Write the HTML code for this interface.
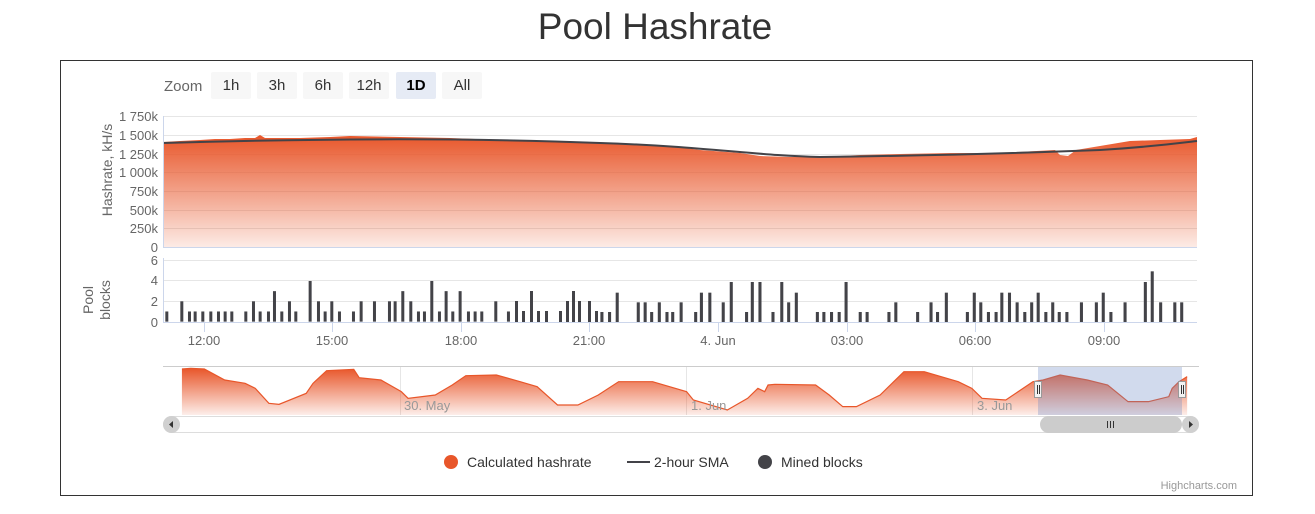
<!DOCTYPE html>
<html><head><meta charset="utf-8"><style>
body{margin:0;background:#fff;width:1315px;height:509px;overflow:hidden;font-family:"Liberation Sans",sans-serif}
</style></head><body>
<svg width="1315" height="509" xmlns="http://www.w3.org/2000/svg" font-family="Liberation Sans, sans-serif">
<defs>
<linearGradient id="g" x1="0" y1="0" x2="0" y2="1"><stop offset="0" stop-color="#e8562a"/><stop offset="1" stop-color="#e8562a" stop-opacity="0.12"/></linearGradient>
<linearGradient id="g2" x1="0" y1="0" x2="0" y2="1"><stop offset="0" stop-color="#e8562a"/><stop offset="1" stop-color="#e8562a" stop-opacity="0.1"/></linearGradient>
</defs>
<text x="655" y="39" text-anchor="middle" font-size="37" fill="#333">Pool Hashrate</text>
<rect x="60.5" y="60.5" width="1192" height="435" fill="none" stroke="#333"/>
<text x="164" y="91" font-size="15" fill="#666">Zoom</text>
<g font-size="15" fill="#333" text-anchor="middle">
<rect x="211" y="72" width="40" height="27" rx="2" fill="#f7f7f7"/><text x="231" y="90">1h</text>
<rect x="257" y="72" width="40" height="27" rx="2" fill="#f7f7f7"/><text x="277" y="90">3h</text>
<rect x="303" y="72" width="40" height="27" rx="2" fill="#f7f7f7"/><text x="323" y="90">6h</text>
<rect x="349" y="72" width="40" height="27" rx="2" fill="#f7f7f7"/><text x="369" y="90">12h</text>
<rect x="396" y="72" width="40" height="27" rx="2" fill="#e6ebf5"/><text x="416" y="90" font-weight="bold" fill="#000">1D</text>
<rect x="442" y="72" width="40" height="27" rx="2" fill="#f7f7f7"/><text x="462" y="90">All</text>
</g>
<g stroke="#e6e6e6">
<line x1="163" y1="116.5" x2="1197" y2="116.5"/><line x1="163" y1="135.5" x2="1197" y2="135.5"/><line x1="163" y1="154.5" x2="1197" y2="154.5"/><line x1="163" y1="172.5" x2="1197" y2="172.5"/><line x1="163" y1="191.5" x2="1197" y2="191.5"/><line x1="163" y1="210.5" x2="1197" y2="210.5"/><line x1="163" y1="228.5" x2="1197" y2="228.5"/>
<line x1="163" y1="260.5" x2="1197" y2="260.5"/><line x1="163" y1="280.5" x2="1197" y2="280.5"/><line x1="163" y1="301.5" x2="1197" y2="301.5"/>
</g>
<g font-size="13" fill="#666" text-anchor="end">
<text x="158" y="121">1 750k</text><text x="158" y="140">1 500k</text><text x="158" y="159">1 250k</text><text x="158" y="177">1 000k</text><text x="158" y="196">750k</text><text x="158" y="215">500k</text><text x="158" y="233">250k</text><text x="158" y="252">0</text>
<text x="158" y="265">6</text><text x="158" y="285">4</text><text x="158" y="306">2</text><text x="158" y="327">0</text>
</g>
<text transform="translate(112,170) rotate(-90)" text-anchor="middle" font-size="14" fill="#666">Hashrate, kH/s</text>
<text transform="translate(93,300) rotate(-90)" text-anchor="middle" font-size="14" fill="#666">Pool</text>
<text transform="translate(110,300) rotate(-90)" text-anchor="middle" font-size="14" fill="#666">blocks</text>
<path d="M163,142 L180,141 L200,140 L215,139 L230,139 L245,138 L255,138 L260,135 L265,138 L300,138 L330,137 L350,136 L400,137 L450,138 L500,140 L560,141 L620,143 L670,146 L700,150 L740,153 L760,156 L790,157 L820,157 L860,155 L900,154 L950,153 L1000,153 L1055,150 L1060,155 L1068,156 L1076,150 L1100,146 L1130,141 L1160,140 L1190,139 L1197,137 L1197,247 L163,247Z" fill="url(#g)"/>
<path d="M163,143 C300,139 450,137 600,143 C700,146 760,156 820,157 C900,156 1000,154 1100,150 C1150,147 1180,143 1197,141" fill="none" stroke="#434348" stroke-width="2"/>
<line x1="163.5" y1="116" x2="163.5" y2="247" stroke="#ccd6eb"/>
<line x1="163.5" y1="258" x2="163.5" y2="322" stroke="#ccd6eb"/>
<line x1="163" y1="247.5" x2="1197" y2="247.5" stroke="#ccd6eb"/>
<g fill="#434348">
<g transform="translate(60,60) scale(0.3333)">
<rect x="316" y="754.5" width="9" height="30.5"/><rect x="361" y="724" width="9" height="61"/><rect x="384" y="754.5" width="9" height="30.5"/><rect x="401" y="754.5" width="9" height="30.5"/><rect x="424" y="754.5" width="9" height="30.5"/><rect x="448" y="754.5" width="9" height="30.5"/><rect x="471" y="754.5" width="9" height="30.5"/><rect x="491" y="754.5" width="9" height="30.5"/><rect x="511" y="754.5" width="9" height="30.5"/><rect x="553" y="754.5" width="9" height="30.5"/><rect x="576" y="724" width="9" height="61"/><rect x="596" y="754.5" width="9" height="30.5"/><rect x="621" y="754.5" width="9" height="30.5"/><rect x="639" y="693.5" width="9" height="91.5"/><rect x="661" y="754.5" width="9" height="30.5"/><rect x="684" y="724" width="9" height="61"/><rect x="703" y="754.5" width="9" height="30.5"/><rect x="746" y="663" width="9" height="122"/><rect x="771" y="724" width="9" height="61"/><rect x="791" y="754.5" width="9" height="30.5"/><rect x="811" y="724" width="9" height="61"/><rect x="834" y="754.5" width="9" height="30.5"/><rect x="876" y="754.5" width="9" height="30.5"/><rect x="899" y="724" width="9" height="61"/><rect x="939" y="724" width="9" height="61"/><rect x="984" y="724" width="9" height="61"/><rect x="1001" y="724" width="9" height="61"/><rect x="1024" y="693.5" width="9" height="91.5"/><rect x="1048" y="724" width="9" height="61"/><rect x="1071" y="754.5" width="9" height="30.5"/><rect x="1089" y="754.5" width="9" height="30.5"/><rect x="1111" y="663" width="9" height="122"/><rect x="1134" y="754.5" width="9" height="30.5"/><rect x="1154" y="693.5" width="9" height="91.5"/><rect x="1174" y="754.5" width="9" height="30.5"/><rect x="1196" y="693.5" width="9" height="91.5"/><rect x="1221" y="754.5" width="9" height="30.5"/><rect x="1241" y="754.5" width="9" height="30.5"/><rect x="1261" y="754.5" width="9" height="30.5"/><rect x="1303" y="724" width="9" height="61"/><rect x="1341" y="754.5" width="9" height="30.5"/>
</g>
<rect x="515" y="301" width="3" height="21"/><rect x="522" y="311" width="3" height="11"/><rect x="530" y="291" width="3" height="31"/><rect x="537" y="311" width="3" height="11"/><rect x="545" y="311" width="3" height="11"/><rect x="559" y="311" width="3" height="11"/><rect x="566" y="301" width="3" height="21"/><rect x="572" y="291" width="3" height="31"/><rect x="578" y="301" width="3" height="21"/><rect x="588" y="301" width="3" height="21"/><rect x="595" y="311" width="3" height="11"/>
<g transform="translate(600,256) scale(0.3827,0.3333)">
<rect x="1" y="168" width="8" height="30"/><rect x="21" y="168" width="8" height="30"/><rect x="41" y="110" width="8" height="88"/><rect x="96" y="139" width="8" height="59"/><rect x="114" y="139" width="8" height="59"/><rect x="131" y="168" width="8" height="30"/><rect x="151" y="139" width="8" height="59"/><rect x="171" y="168" width="8" height="30"/><rect x="186" y="168" width="8" height="30"/><rect x="208" y="139" width="8" height="59"/><rect x="246" y="168" width="8" height="30"/><rect x="261" y="110" width="8" height="88"/><rect x="283" y="110" width="8" height="88"/><rect x="318" y="139" width="8" height="59"/><rect x="339" y="78" width="8" height="120"/><rect x="379" y="168" width="8" height="30"/><rect x="394" y="78" width="8" height="120"/><rect x="414" y="78" width="8" height="120"/><rect x="448" y="168" width="8" height="30"/><rect x="471" y="78" width="8" height="120"/><rect x="489" y="139" width="8" height="59"/><rect x="509" y="110" width="8" height="88"/><rect x="564" y="168" width="8" height="30"/><rect x="581" y="168" width="8" height="30"/><rect x="601" y="168" width="8" height="30"/><rect x="621" y="168" width="8" height="30"/><rect x="639" y="78" width="8" height="120"/><rect x="676" y="168" width="8" height="30"/><rect x="694" y="168" width="8" height="30"/><rect x="751" y="168" width="8" height="30"/><rect x="769" y="139" width="8" height="59"/><rect x="826" y="168" width="8" height="30"/><rect x="861" y="139" width="8" height="59"/><rect x="878" y="168" width="8" height="30"/><rect x="901" y="110" width="8" height="88"/><rect x="956" y="168" width="8" height="30"/><rect x="974" y="110" width="8" height="88"/><rect x="991" y="139" width="8" height="59"/><rect x="1011" y="168" width="8" height="30"/><rect x="1031" y="168" width="8" height="30"/><rect x="1046" y="110" width="8" height="88"/><rect x="1066" y="110" width="8" height="88"/><rect x="1086" y="139" width="8" height="59"/><rect x="1106" y="168" width="8" height="30"/><rect x="1124" y="139" width="8" height="59"/><rect x="1141" y="110" width="8" height="88"/><rect x="1161" y="168" width="8" height="30"/><rect x="1179" y="139" width="8" height="59"/><rect x="1196" y="168" width="8" height="30"/><rect x="1216" y="168" width="8" height="30"/><rect x="1254" y="139" width="8" height="59"/><rect x="1293" y="139" width="8" height="59"/><rect x="1311" y="110" width="8" height="88"/><rect x="1331" y="168" width="8" height="30"/><rect x="1368" y="139" width="8" height="59"/><rect x="1421" y="78" width="8" height="120"/><rect x="1439" y="46" width="8" height="152"/><rect x="1461" y="139" width="8" height="59"/><rect x="1498" y="139" width="8" height="59"/><rect x="1516" y="139" width="8" height="59"/>
</g>
</g>
<line x1="163" y1="322.5" x2="1197" y2="322.5" stroke="#ccd6eb"/>
<g stroke="#ccd6eb"><line x1="204.5" y1="322" x2="204.5" y2="332"/><line x1="332.5" y1="322" x2="332.5" y2="332"/><line x1="461.5" y1="322" x2="461.5" y2="332"/><line x1="589.5" y1="322" x2="589.5" y2="332"/><line x1="718.5" y1="322" x2="718.5" y2="332"/><line x1="847.5" y1="322" x2="847.5" y2="332"/><line x1="975.5" y1="322" x2="975.5" y2="332"/><line x1="1104.5" y1="322" x2="1104.5" y2="332"/></g>
<g font-size="13" fill="#666" text-anchor="middle">
<text x="204" y="345">12:00</text><text x="332" y="345">15:00</text><text x="461" y="345">18:00</text><text x="589" y="345">21:00</text><text x="718" y="345">4. Jun</text><text x="847" y="345">03:00</text><text x="975" y="345">06:00</text><text x="1104" y="345">09:00</text>
</g>
<line x1="163" y1="366.5" x2="1199" y2="366.5" stroke="#ccc"/>
<g stroke="#e6e6e6"><line x1="400.5" y1="367" x2="400.5" y2="415"/><line x1="686.5" y1="367" x2="686.5" y2="415"/><line x1="972.5" y1="367" x2="972.5" y2="415"/></g>
<g transform="translate(150,355) scale(0.6792,0.3333)">
<path d="M47,42 L60,40 L80,42 L110,75 L140,85 L155,100 L175,145 L190,148 L230,115 L240,85 L260,47 L300,43 L308,68 L340,75 L370,110 L380,130 L420,120 L445,90 L465,62 L510,60 L545,80 L570,95 L600,150 L630,150 L660,120 L690,80 L740,80 L790,110 L800,135 L850,165 L880,130 L895,100 L905,110 L910,90 L920,88 L980,90 L1000,120 L1020,155 L1040,155 L1075,120 L1110,50 L1140,50 L1190,80 L1210,100 L1225,130 L1260,135 L1300,80 L1315,75 L1340,60 L1380,75 L1410,90 L1440,140 L1470,140 L1500,125 L1505,100 L1515,80 L1527,65 L1527,180 L47,180Z" fill="url(#g2)"/>
<path d="M47,42 L60,40 L80,42 L110,75 L140,85 L155,100 L175,145 L190,148 L230,115 L240,85 L260,47 L300,43 L308,68 L340,75 L370,110 L380,130 L420,120 L445,90 L465,62 L510,60 L545,80 L570,95 L600,150 L630,150 L660,120 L690,80 L740,80 L790,110 L800,135 L850,165 L880,130 L895,100 L905,110 L910,90 L920,88 L980,90 L1000,120 L1020,155 L1040,155 L1075,120 L1110,50 L1140,50 L1190,80 L1210,100 L1225,130 L1260,135 L1300,80 L1315,75 L1340,60 L1380,75 L1410,90 L1440,140 L1470,140 L1500,125 L1505,100 L1515,80 L1527,65" fill="none" stroke="#e8562a" stroke-width="1.2" vector-effect="non-scaling-stroke"/>
</g>
<g font-size="13" fill="#999"><text x="404" y="410">30. May</text><text x="691" y="410">1. Jun</text><text x="977" y="410">3. Jun</text></g>
<rect x="1038" y="367" width="144" height="48" fill="rgba(102,133,194,0.3)"/>
<rect x="1034.5" y="381.5" width="7" height="16" fill="#f2f2f2" stroke="#999"/><line x1="1037.5" y1="385" x2="1037.5" y2="394" stroke="#333"/><line x1="1039.5" y1="385" x2="1039.5" y2="394" stroke="#333"/>
<rect x="1178.5" y="381.5" width="7" height="16" fill="#f2f2f2" stroke="#999"/><line x1="1181.5" y1="385" x2="1181.5" y2="394" stroke="#333"/><line x1="1183.5" y1="385" x2="1183.5" y2="394" stroke="#333"/>
<rect x="163.5" y="416.5" width="1035" height="16" rx="8" fill="#fff" stroke="#ddd"/>
<rect x="163" y="416" width="17" height="17" rx="8.5" fill="#d0d0d0"/>
<rect x="1182" y="416" width="17" height="17" rx="8.5" fill="#d0d0d0"/>
<path d="M173,421 L169,424.5 L173,428Z" fill="#333"/><path d="M1189,421 L1193,424.5 L1189,428Z" fill="#333"/>
<rect x="1040" y="416" width="142" height="17" rx="8.5" fill="#ccc"/>
<g stroke="#333"><line x1="1107.5" y1="421" x2="1107.5" y2="428"/><line x1="1110.5" y1="421" x2="1110.5" y2="428"/><line x1="1113.5" y1="421" x2="1113.5" y2="428"/></g>
<circle cx="451" cy="462" r="7" fill="#e8562a"/>
<text x="467" y="467" font-size="14" fill="#333">Calculated hashrate</text>
<line x1="627" y1="462" x2="650" y2="462" stroke="#434348" stroke-width="2"/>
<text x="654" y="467" font-size="14" fill="#333">2-hour SMA</text>
<circle cx="765" cy="462" r="7" fill="#434348"/>
<text x="781" y="467" font-size="14" fill="#333">Mined blocks</text>
<text x="1237" y="489" text-anchor="end" font-size="11" fill="#999">Highcharts.com</text>
</svg>
</body></html>
